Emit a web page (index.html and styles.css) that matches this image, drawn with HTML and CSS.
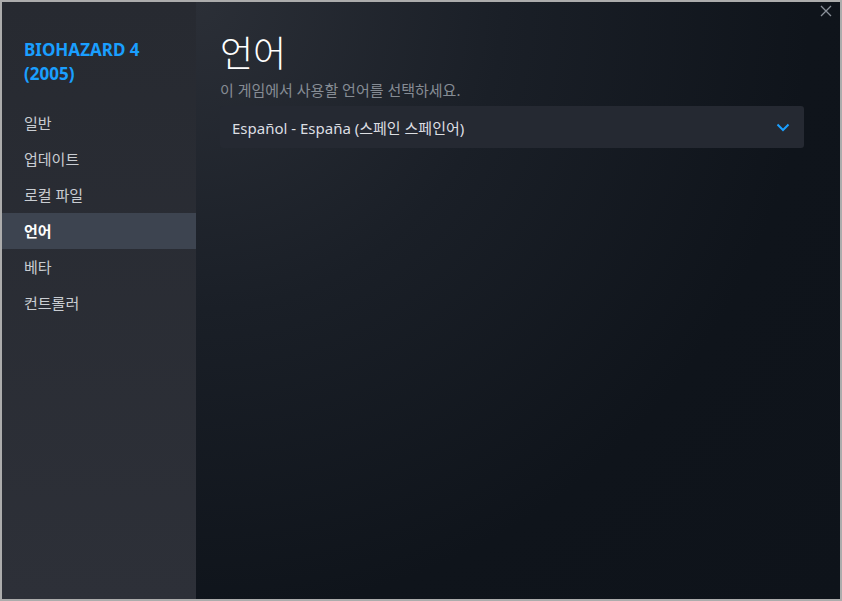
FILE: index.html
```html
<!DOCTYPE html>
<html lang="ko">
<head>
<meta charset="utf-8">
<link rel="stylesheet" href="styles.css">
</head>
<body>
<div class="window">
  <aside class="sidebar">
    <div class="game-title">BIOHAZARD 4<br>(2005)</div>
    <nav class="nav">
      <div class="nav-item">일반</div>
      <div class="nav-item">업데이트</div>
      <div class="nav-item">로컬 파일</div>
      <div class="nav-item active">언어</div>
      <div class="nav-item">베타</div>
      <div class="nav-item">컨트롤러</div>
    </nav>
  </aside>
  <main class="content">
    <button class="close" aria-label="닫기">
      <svg width="12" height="12" viewBox="0 0 12 12"><path d="M1 1L11 11M11 1L1 11" stroke="#8a9099" stroke-width="1.3" fill="none"/></svg>
    </button>
    <h1 class="heading">언어</h1>
    <p class="subtitle">이 게임에서 사용할 언어를 선택하세요.</p>
    <div class="dropdown">
      <span class="dropdown-value">Español - España (스페인 스페인어)</span>
      <svg class="chevron" width="14" height="9" viewBox="0 0 14 9"><path d="M1.5 1.5L7 7L12.5 1.5" stroke="#1a9fff" stroke-width="2" fill="none"/></svg>
    </div>
  </main>
</div>
</body>
</html>
```
FILE: styles.css
```css
html, body {
  margin: 0;
  padding: 0;
  height: 100%;
}
body {
  background: #acacac;
  font-family: "Noto Sans", "Noto Sans CJK KR", sans-serif;
  padding: 2px;
  box-sizing: border-box;
}
.window {
  display: flex;
  height: 597px;
  width: 838px;
  overflow: hidden;
}
.sidebar {
  width: 194px;
  flex: none;
  background: linear-gradient(180deg, #272a31 0%, #2d3038 100%);
  padding-top: 36px;
  box-sizing: border-box;
}
.game-title {
  color: #1a9fff;
  font-weight: 700;
  font-size: 17px;
  line-height: 24px;
  padding: 0 22px;
  margin-bottom: 19px;
}
.nav-item {
  height: 36px;
  line-height: 36px;
  padding: 0 22px;
  font-size: 15px;
  color: #c9cdd2;
}
.nav-item.active {
  background: #3d4450;
  color: #ffffff;
  font-weight: 700;
}
.content {
  flex: 1;
  position: relative;
  background: radial-gradient(circle at 0% 0%, #2b2f37 0%, #1a1f27 35%, #0f141b 70%, #0e131a 100%);
  padding: 30px 36px 0 24px;
  box-sizing: border-box;
}
.close {
  position: absolute;
  top: 3px;
  right: 8px;
  background: none;
  border: 0;
  padding: 0;
  width: 12px;
  height: 12px;
  display: flex;
}
.heading {
  margin: 0;
  font-size: 36px;
  font-weight: 300;
  line-height: 44px;
  color: #ffffff;
}
.subtitle {
  margin: 2px 0 0;
  font-size: 15px;
  line-height: 24px;
  color: #868c94;
}
.dropdown {
  margin-top: 4px;
  height: 42px;
  border-radius: 3px;
  background: #252932;
  display: flex;
  align-items: center;
  justify-content: space-between;
  padding: 0 14px 0 12px;
}
.dropdown-value {
  font-size: 15px;
  color: #dcdee2;
}
.chevron {
  display: block;
}
```
